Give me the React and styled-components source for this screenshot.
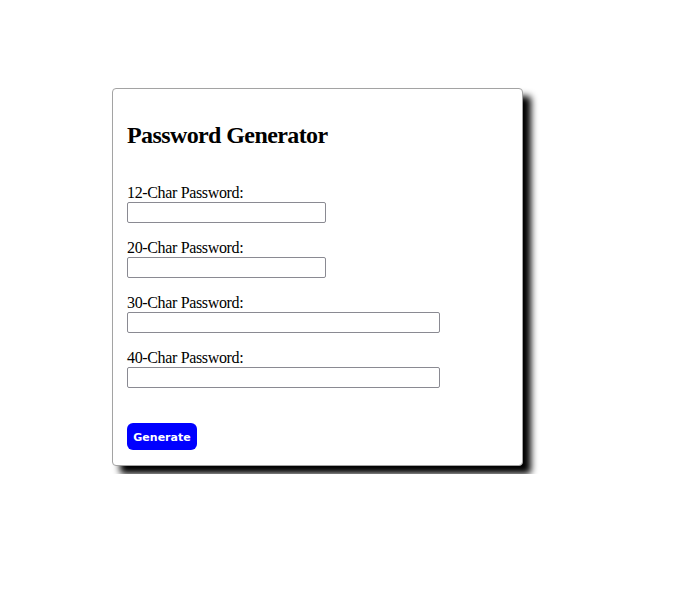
import React from "react";
import styled, { createGlobalStyle } from "styled-components";

const GlobalStyle = createGlobalStyle`
  html, body { margin: 0; padding: 0; background: #ffffff; }
  body {
    padding: 8px;
    font-family: "Liberation Serif", "Times New Roman", serif;
    color: #000;
  }
`;

const Card = styled.div`
  box-sizing: border-box;
  width: 411px;
  height: 378px;
  margin: 80px 0 0 104px;
  padding: 12px 14px 15px;
  border: 1px solid #a3a3a3;
  border-radius: 4px;
  background: #fff;
  box-shadow: 8px 8px 7px #000;
  display: flex;
  flex-direction: column;
`;

const Title = styled.h2`
  margin: 20px 0 0;
  font-size: 24px;
  line-height: 28px;
  font-weight: bold;
  letter-spacing: -0.6px;
`;

const Fields = styled.div`
  display: flex;
  flex-direction: column;
  gap: 16px;
  margin-top: 35px;
`;

const Field = styled.div`
  display: flex;
  flex-direction: column;
  align-items: flex-start;
`;

const Label = styled.label`
  font-size: 16px;
  line-height: 18px;
  letter-spacing: -0.35px;
`;

const Input = styled.input`
  box-sizing: border-box;
  width: ${(p) => p.$w}px;
  height: 21px;
  margin: 0;
  padding: 1px 2px;
  border: 1px solid #8a8a92;
  border-radius: 2px;
  background: #fff;
  font-family: "Liberation Sans", Arial, sans-serif;
  font-size: 13px;
`;

const Button = styled.button`
  align-self: flex-start;
  margin-top: 35px;
  height: 27px;
  padding: 0 6px;
  min-width: 70px;
  border: none;
  border-radius: 6px;
  background: #0000ff;
  color: #fff;
  font-family: "DejaVu Sans", Verdana, sans-serif;
  font-weight: bold;
  font-size: 11px;
  line-height: 29px;
  cursor: pointer;
`;

const fields = [
  { id: "p12", label: "12-Char Password:", w: 199 },
  { id: "p20", label: "20-Char Password:", w: 199 },
  { id: "p30", label: "30-Char Password:", w: 313 },
  { id: "p40", label: "40-Char Password:", w: 313 },
];

export default function App() {
  return (
    <>
      <GlobalStyle />
      <Card>
        <Title>Password Generator</Title>
        <Fields>
          {fields.map((f) => (
            <Field key={f.id}>
              <Label htmlFor={f.id}>{f.label}</Label>
              <Input id={f.id} type="text" readOnly $w={f.w} />
            </Field>
          ))}
        </Fields>
        <Button type="button">Generate</Button>
      </Card>
    </>
  );
}
